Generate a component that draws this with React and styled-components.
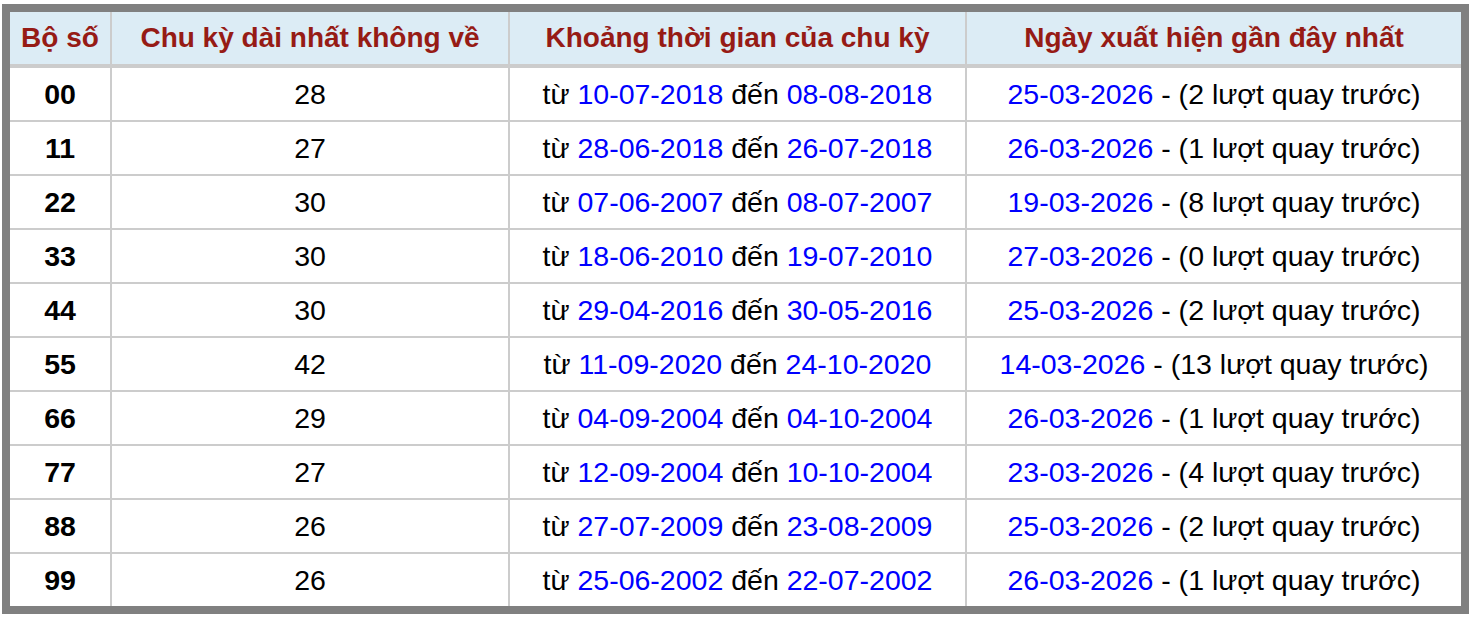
import React from "react";
import styled, { createGlobalStyle } from "styled-components";

const GlobalStyle = createGlobalStyle`
  html, body {
    margin: 0;
    padding: 0;
    background: #ffffff;
  }
  body {
    font-family: "Liberation Sans", Arial, Helvetica, sans-serif;
  }
`;

const Wrap = styled.div`
  padding: 4px 0 0 2px;
`;

const Table = styled.table`
  width: 1467px;
  table-layout: fixed;
  border-collapse: separate;
  border-spacing: 0;
  border: 8px solid #808080;
  font-size: 28.5px;
  color: #000;
`;

const HeadCell = styled.th`
  height: 52px;
  padding: 0;
  background: #dcecf5;
  color: #961b15;
  font-size: 28px;
  font-weight: 700;
  text-align: center;
  vertical-align: middle;
  white-space: nowrap;
  border-bottom: 4px solid #cccccc;
  border-right: ${(p) => (p.$last ? "none" : "2px solid #cccccc")};
`;

const Cell = styled.td`
  height: 52px;
  padding: 0;
  text-align: center;
  vertical-align: middle;
  white-space: nowrap;
  font-weight: ${(p) => (p.$bold ? 700 : 400)};
  border-bottom: ${(p) => (p.$lastRow ? "none" : "2px solid #cccccc")};
  border-right: ${(p) => (p.$last ? "none" : "2px solid #cccccc")};
`;

const DateText = styled.span`
  color: #0000ff;
`;

const rows = [
  ["00", 28, "10-07-2018", "08-08-2018", "25-03-2026", 2],
  ["11", 27, "28-06-2018", "26-07-2018", "26-03-2026", 1],
  ["22", 30, "07-06-2007", "08-07-2007", "19-03-2026", 8],
  ["33", 30, "18-06-2010", "19-07-2010", "27-03-2026", 0],
  ["44", 30, "29-04-2016", "30-05-2016", "25-03-2026", 2],
  ["55", 42, "11-09-2020", "24-10-2020", "14-03-2026", 13],
  ["66", 29, "04-09-2004", "04-10-2004", "26-03-2026", 1],
  ["77", 27, "12-09-2004", "10-10-2004", "23-03-2026", 4],
  ["88", 26, "27-07-2009", "23-08-2009", "25-03-2026", 2],
  ["99", 26, "25-06-2002", "22-07-2002", "26-03-2026", 1],
];

const App = () => {
  return (
    <>
      <GlobalStyle />
      <Wrap>
        <Table>
          <colgroup>
            <col style={{ width: "102px" }} />
            <col style={{ width: "398px" }} />
            <col style={{ width: "457px" }} />
            <col style={{ width: "494px" }} />
          </colgroup>
          <thead>
            <tr>
              <HeadCell>Bộ số</HeadCell>
              <HeadCell>Chu kỳ dài nhất không về</HeadCell>
              <HeadCell>Khoảng thời gian của chu kỳ</HeadCell>
              <HeadCell $last>Ngày xuất hiện gần đây nhất</HeadCell>
            </tr>
          </thead>
          <tbody>
            {rows.map(([pair, len, from, to, last, turns], i) => {
              const lastRow = i === rows.length - 1;
              return (
                <tr key={pair}>
                  <Cell $bold $lastRow={lastRow}>{pair}</Cell>
                  <Cell $lastRow={lastRow}>{len}</Cell>
                  <Cell $lastRow={lastRow}>
                    từ <DateText>{from}</DateText> đến <DateText>{to}</DateText>
                  </Cell>
                  <Cell $last $lastRow={lastRow}>
                    <DateText>{last}</DateText> - ({turns} lượt quay trước)
                  </Cell>
                </tr>
              );
            })}
          </tbody>
        </Table>
      </Wrap>
    </>
  );
};

export default App;
